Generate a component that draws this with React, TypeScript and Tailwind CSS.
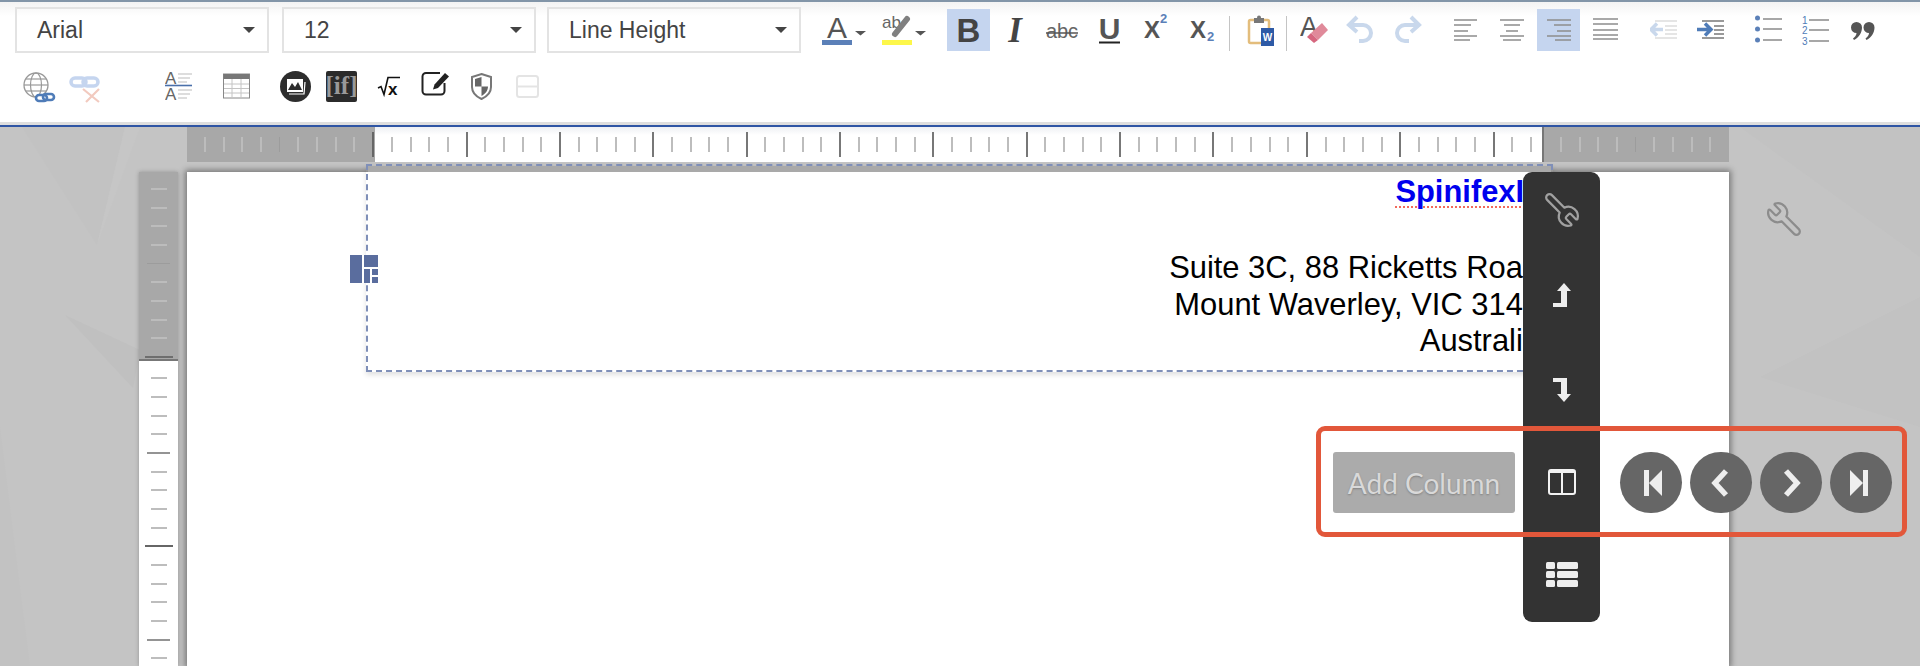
import type { ReactNode } from "react";
import { Wrench } from "lucide-react";

const Ico = ({ w, h = 46, className = "", children }: { w: number; h?: number; className?: string; children: ReactNode }) => (
  <svg width={w} height={h} viewBox={`0 0 ${w} ${h}`} className={`shrink-0 ${className}`}>
    {children}
  </svg>
);

const Lines = ({ rows, color = "#8c8c8c", sw = 1.5 }: { rows: number[][]; color?: string; sw?: number }) => (
  <>
    {rows.map(([a, b, y], i) => (
      <line key={i} x1={a} x2={b} y1={y} y2={y} stroke={color} strokeWidth={sw} />
    ))}
  </>
);

const Select = ({ label, className = "" }: { label: string; className?: string }) => (
  <div className={`w-[254px] h-[46px] shrink-0 border-2 border-[#e3e3e3] flex items-center justify-between pl-[20px] pr-[12px] text-[23px] text-[#444] ${className}`}>
    <span>{label}</span>
    <span className="w-0 h-0 border-x-[6px] border-x-transparent border-t-[6px] border-t-[#444]" />
  </div>
);

const HTick = ({ kind }: { kind: string }) => {
  const cls: Record<string, string> = {
    minor: "h-[15px] w-[2px] bg-[#bdbdbd]",
    major: "h-[25px] w-[2px] bg-[#777]",
    grayMinor: "h-[15px] w-[2px] bg-[#bcbcbc]",
    grayDim: "h-[15px] w-px bg-[#9c9c9c]",
    grayDark: "h-[25px] w-[2px] bg-[#666]",
  };
  return (
    <div className="w-[18.68px] shrink-0 flex justify-center items-center">
      <div className={cls[kind]} />
    </div>
  );
};

const VTick = ({ kind }: { kind: string }) => {
  const cls: Record<string, string> = {
    minor: "w-[16px] h-[2px] bg-[#bdbdbd]",
    mid: "w-[23px] h-[2px] bg-[#949494]",
    dark: "w-[28px] h-[2px] bg-[#666]",
    grayMinor: "w-[16px] h-[2px] bg-[#bcbcbc]",
    grayDim: "w-[23px] h-px bg-[#9c9c9c]",
    grayDark: "w-[28px] h-[2px] bg-[#6e6e6e]",
  };
  return (
    <div className="h-[18.68px] shrink-0 flex justify-center items-center">
      <div className={cls[kind]} />
    </div>
  );
};

const NavBtn = ({ children }: { children: ReactNode }) => (
  <div className="w-[62px] h-[61px] rounded-full bg-[#666] flex items-center justify-center">
    <svg width="28" height="30" viewBox="0 0 28 30">
      {children}
    </svg>
  </div>
);

const Toolbar = () => (
  <header className="h-[127px] shrink-0 border-t-2 border-b-2 border-t-[#8295a8] border-b-[#2f55a4] bg-linear-to-b from-[#f3f3f3] to-white to-[14px] shadow-[inset_0_-3px_0_#dedede]">
    {/* first row */}
    <div className="flex items-start pt-[5px] pl-[15px] h-[51px]">
      <Select label="Arial" />
      <Select label="12" className="ml-[13px]" />
      <Select label="Line Height" className="ml-[11px] mr-[1px]" />

      <Ico w={48} className="ml-[18px]">
        <text x="17" y="31" fontSize="30" fill="#555" textAnchor="middle">A</text>
        <rect x="2" y="33" width="30" height="5" fill="#5b80b8" />
        <polygon points="35,24 46,24 40.5,28.5" fill="#555" />
      </Ico>
      <Ico w={48} className="ml-[12px]">
        <text x="2" y="21" fontSize="17" fill="#666">ab</text>
        <line x1="27" y1="12" x2="15" y2="27" stroke="#808080" strokeWidth="6" strokeLinecap="round" />
        <rect x="2" y="33" width="30" height="5" fill="#fdf74a" />
        <polygon points="35,24 46,24 40.5,28.5" fill="#555" />
      </Ico>
      <div className="ml-[19px] mt-[2px] w-[43px] h-[42px] bg-[#c5d5ef]">
        <Ico w={43} h={42}>
          <text x="21.5" y="33" fontSize="33" fontWeight="700" fill="#444" textAnchor="middle">B</text>
        </Ico>
      </div>
      <Ico w={30} className="ml-[10px]">
        <text x="15" y="35" fontSize="35" fontWeight="700" fontStyle="italic" fontFamily="'Liberation Serif', serif" fill="#444" textAnchor="middle">I</text>
      </Ico>
      <Ico w={35} className="ml-[15px]">
        <text x="17" y="31" fontSize="20" fill="#666" textAnchor="middle">abc</text>
        <line x1="1" x2="33" y1="26" y2="26" stroke="#555" strokeWidth="1.5" />
      </Ico>
      <Ico w={30} className="ml-[15px]">
        <text x="14.5" y="32" fontSize="30" fontWeight="700" fill="#555" textAnchor="middle">U</text>
        <rect x="4" y="34.5" width="21" height="2" fill="#222" />
      </Ico>
      <Ico w={32} className="ml-[13px]">
        <text x="6" y="31" fontSize="24" fontWeight="700" fill="#555">X</text>
        <text x="22" y="16" fontSize="13" fontWeight="700" fill="#5b80b8">2</text>
      </Ico>
      <Ico w={32} className="ml-[16px]">
        <text x="4" y="31" fontSize="24" fontWeight="700" fill="#555">X</text>
        <text x="21" y="34" fontSize="13" fontWeight="700" fill="#5b80b8">2</text>
      </Ico>
      <div className="ml-[11px] mt-[9px] w-px h-[35px] bg-[#c4c4c4]" />
      <Ico w={32} className="ml-[15px]">
        <rect x="4" y="13" width="20" height="23" rx="1.5" fill="#fff" stroke="#e3bd7c" strokeWidth="2.5" />
        <rect x="9" y="11" width="10" height="5" fill="#777" />
        <circle cx="14" cy="10.5" r="2" fill="#777" />
        <rect x="16" y="21" width="13" height="18" fill="#2e5aa6" />
        <text x="22.5" y="34" fontSize="10" fontWeight="700" fill="#fff" textAnchor="middle">W</text>
      </Ico>
      <div className="ml-[9px] mt-[9px] w-px h-[35px] bg-[#c4c4c4]" />
      <Ico w={30} className="ml-[13px]">
        <text x="0" y="29" fontSize="27" fill="#555">A</text>
        <polygon points="22,16 28,23 18,33 11,26" fill="#e08a9a" />
        <polygon points="11,26 18,33 14,36 7,30" fill="#d6677f" />
      </Ico>
      <Ico w={29} className="ml-[16px]">
        <path d="M11 10 L3 18 L11 25 M4 18 H17 A8 8 0 0 1 17 34 H13" fill="none" stroke="#c9d8ec" strokeWidth="4" />
      </Ico>
      <Ico w={29} className="ml-[18px]">
        <path d="M18 10 L26 18 L18 25 M25 18 H12 A8 8 0 0 0 12 34 H16" fill="none" stroke="#c9d8ec" strokeWidth="4" />
      </Ico>
      <Ico w={24} className="ml-[32px]">
        <Lines rows={[[0, 23, 13], [0, 17, 18], [0, 14, 24], [0, 23, 29], [0, 16, 33]]} />
      </Ico>
      <Ico w={24} className="ml-[22px]">
        <Lines rows={[[0, 24, 13], [4, 20, 18], [6, 18, 24], [0, 24, 29], [3, 21, 33]]} />
      </Ico>
      <div className="ml-[13px] mt-[2px] w-[43px] h-[42px] bg-[#c5d5ef]">
        <Ico w={43} h={42}>
          <Lines rows={[[10, 34, 11], [17, 34, 16], [20, 34, 22], [10, 34, 27], [18, 34, 31]]} />
        </Ico>
      </div>
      <Ico w={25} className="ml-[13px]">
        <Lines rows={[[0, 25, 12], [0, 25, 17], [0, 25, 23], [0, 25, 28], [0, 25, 32]]} />
      </Ico>
      <Ico w={28} className="ml-[32px]">
        <Lines color="#dcdcdc" rows={[[5, 27, 14], [15, 27, 19], [15, 27, 23], [15, 27, 27], [5, 27, 31]]} />
        <path d="M7 16.5 L1 22.5 L7 28.5 M2 22.5 H13" fill="none" stroke="#c9d8ec" strokeWidth="3.5" />
      </Ico>
      <Ico w={28} className="ml-[19px]">
        <Lines color="#777" rows={[[5, 27, 14], [17, 27, 19], [17, 27, 23], [17, 27, 27], [5, 27, 31]]} />
        <path d="M8 16.5 L14 22.5 L8 28.5 M0 22.5 H13" fill="none" stroke="#4f7cb8" strokeWidth="3.5" />
      </Ico>
      <Ico w={28} className="ml-[30px]">
        <circle cx="2.5" cy="11" r="2.5" fill="#5b80b8" />
        <circle cx="2.5" cy="22" r="2.5" fill="#5b80b8" />
        <circle cx="2.5" cy="33" r="2.5" fill="#5b80b8" />
        <Lines color="#777" sw={1.3} rows={[[8, 27, 12], [8, 27, 22], [8, 27, 33]]} />
      </Ico>
      <Ico w={29} className="ml-[18px]">
        <text x="1" y="17" fontSize="10" fill="#4f7cb8">1</text>
        <text x="1" y="27" fontSize="10" fill="#4f7cb8">2</text>
        <text x="1" y="38" fontSize="10" fill="#4f7cb8">3</text>
        <Lines color="#777" sw={1.3} rows={[[8, 28, 13], [8, 28, 23], [8, 28, 34]]} />
      </Ico>
      <Ico w={26} className="ml-[20px]">
        <path d="M6.5 15 a5.5 5.5 0 0 1 5.5 5.5 c0 5 -3 10 -8 12.5 l-1 -1.5 c2 -1.5 3.5 -3.5 3.5 -5.5 a5.5 5.5 0 0 1 0 -11z" fill="#555" />
        <path d="M19 15 a5.5 5.5 0 0 1 5.5 5.5 c0 5 -3 10 -8 12.5 l-1 -1.5 c2 -1.5 3.5 -3.5 3.5 -5.5 a5.5 5.5 0 0 1 0 -11z" fill="#555" />
      </Ico>
    </div>

    {/* second row */}
    <div className="flex items-start pl-[22px] mt-[11px]">
      <Ico w={36}>
        <circle cx="14" cy="21" r="12" fill="none" stroke="#999" strokeWidth="1.3" />
        <ellipse cx="14" cy="21" rx="5.5" ry="12" fill="none" stroke="#999" strokeWidth="1.2" />
        <Lines color="#999" sw={1.2} rows={[[2, 26, 21], [4, 24, 15], [4, 24, 27]]} />
        <rect x="14" y="31" width="11" height="6" rx="3" fill="#fff" stroke="#4f7cb8" strokeWidth="2.6" />
        <rect x="21" y="30" width="11" height="6" rx="3" fill="none" stroke="#4f7cb8" strokeWidth="2.6" />
      </Ico>
      <Ico w={36} className="ml-[10px]">
        <rect x="3" y="14" width="15" height="8" rx="4" fill="none" stroke="#c5d5ef" strokeWidth="3.5" />
        <rect x="15" y="14" width="15" height="8" rx="4" fill="none" stroke="#c5d5ef" strokeWidth="3.5" />
        <path d="M15 25 L31 38 M31 25 L18 38" stroke="#f2cabf" strokeWidth="2.2" />
      </Ico>
      <Ico w={28} className="ml-[61px]">
        <text x="0" y="20" fontSize="17" fill="#666">A</text>
        <text x="0" y="36" fontSize="17" fill="#666">A</text>
        <Lines color="#c6c6c6" sw={1.2} rows={[[13, 27, 10], [13, 25, 14], [13, 22, 18], [13, 27, 26], [13, 25, 30], [13, 22, 34]]} />
        <line x1="0" x2="27" y1="21.5" y2="21.5" stroke="#4a70aa" strokeWidth="1.6" />
      </Ico>
      <Ico w={28} className="ml-[30px]">
        <rect x="0.5" y="10" width="26" height="24" fill="#fff" stroke="#888" />
        <rect x="0.5" y="10" width="26" height="5" fill="#777" />
        <Lines color="#c4c4c4" sw={1} rows={[[1, 26, 20], [1, 26, 24.5], [1, 26, 29]]} />
        <line x1="9" x2="9" y1="15" y2="34" stroke="#c4c4c4" />
        <line x1="18" x2="18" y1="15" y2="34" stroke="#c4c4c4" />
      </Ico>
      <Ico w={31} className="ml-[29px]">
        <circle cx="15.5" cy="22.5" r="15.5" fill="#2d2d2d" />
        <rect x="7" y="15" width="16" height="13" fill="#fff" />
        <path d="M8 26 L12 19 L15 23 L18 18 L22 26z" fill="#2d2d2d" />
        <path d="M9 30 L24 30 L25 18" fill="none" stroke="#fff" strokeWidth="1.2" />
      </Ico>
      <Ico w={31} className="ml-[15px]">
        <rect x="0" y="7" width="31" height="31" rx="2" fill="#2b2b2b" />
        <text x="15.5" y="30" fontSize="25" fontWeight="700" fontFamily="'Liberation Serif', serif" fill="#999" textAnchor="middle">[if]</text>
      </Ico>
      <Ico w={24} className="ml-[20px]">
        <path d="M1 24 L4 22.5 L7 30.5 L11 13.5 H23" fill="none" stroke="#111" strokeWidth="1.6" />
        <text x="11" y="31" fontSize="17" fontWeight="700" fill="#111">x</text>
      </Ico>
      <Ico w={30} className="ml-[20px]">
        <path d="M19 9 H5 A3.5 3.5 0 0 0 1.5 12.5 V27 A3.5 3.5 0 0 0 5 30.5 H20 A3.5 3.5 0 0 0 23.5 27 V19" fill="none" stroke="#222" strokeWidth="2" />
        <polygon points="24,9 28,12.5 17,24 12,25.5 13.5,20.5" fill="#222" />
      </Ico>
      <Ico w={23} className="ml-[19px]">
        <path d="M11.5 10 L21 13 V23 C21 29 16 33 11.5 35 C7 33 2 29 2 23 V13z" fill="#fff" stroke="#777" strokeWidth="2" />
        <path d="M11.5 13 L5 15 V22.5 H11.5z M11.5 22.5 H18 C18 27 15 30 11.5 32z" fill="#666" />
      </Ico>
      <Ico w={23} className="ml-[23px]">
        <rect x="1" y="12" width="21" height="21" rx="2.5" fill="none" stroke="#e4e4e4" strokeWidth="2" />
        <line x1="1" x2="22" y1="22.5" y2="22.5" stroke="#e4e4e4" strokeWidth="2" />
      </Ico>
    </div>
  </header>
);

const App = () => {
  const whiteTicks = Array.from({ length: 62 }, (_, i) => (i % 5 === 4 ? "major" : "minor"));
  const vWhite = Array.from({ length: 17 }, (_, i) => (i === 9 ? "dark" : i % 5 === 4 ? "mid" : "minor"));

  return (
    <div className="h-screen w-full flex flex-col overflow-hidden bg-[#c4c4c4] font-['Liberation_Sans',Arial,sans-serif]">
      <Toolbar />

      <main className="relative flex-1 flex flex-col min-h-0 overflow-hidden">
        {/* faint background facets */}
        <svg className="absolute inset-0 w-full h-full" viewBox="0 0 1920 539">
          <polygon points="22,0 97,118 125,0" fill="#c2c2c2" />
          <polygon points="97,118 125,0 140,0" fill="#c6c6c6" />
          <polygon points="65,188 140,223 133,261" fill="#c0c0c0" />
          <polygon points="1740,0 1920,0 1920,130" fill="#c2c2c2" />
          <polygon points="1760,250 1920,170 1920,300" fill="#c2c2c2" />
          <polygon points="0,300 30,539 0,539" fill="#c2c2c2" />
        </svg>

        {/* horizontal ruler */}
        <div className="relative ml-[187px] w-[1542px] h-[35px] shrink-0 flex">
          <div className="w-[188px] shrink-0 bg-[#a8a8a8] flex pl-[8.7px]">
            {[0, 1, 2, 3, 4, 5, 6, 7, 8, 9].map((k) => (
              <HTick key={k} kind={k === 9 ? "grayDark" : k === 4 ? "grayDim" : "grayMinor"} />
            ))}
          </div>
          <div className="flex-1 bg-linear-to-b from-[#eef0f4] to-white to-[8px] flex pl-[7.6px] overflow-hidden">
            {whiteTicks.map((kind, k) => (
              <HTick key={k} kind={kind} />
            ))}
          </div>
          <div className="w-[187px] shrink-0 bg-[#a8a8a8] border-l-2 border-[#777] flex pl-[7.7px] overflow-hidden">
            {[0, 1, 2, 3, 4, 5, 6, 7, 8].map((k) => (
              <HTick key={k} kind={k === 4 ? "grayDim" : "grayMinor"} />
            ))}
          </div>
        </div>

        <div className="relative flex-1 min-h-0 flex mt-[10px] ml-[139px]">
          {/* vertical ruler */}
          <div className="w-[39px] shrink-0 flex flex-col shadow-[0_0_4px_rgba(0,0,0,0.25)]">
            <div className="h-[189px] shrink-0 bg-[#a8a8a8] border-b-2 border-[#777] pt-[7.7px]">
              {[0, 1, 2, 3, 4, 5, 6, 7, 8, 9].map((k) => (
                <VTick key={k} kind={k === 9 ? "grayDark" : k === 4 ? "grayDim" : "grayMinor"} />
              ))}
            </div>
            <div className="flex-1 bg-white pt-[8px] overflow-hidden">
              {vWhite.map((kind, k) => (
                <VTick key={k} kind={kind} />
              ))}
            </div>
          </div>

          {/* page */}
          <div className="ml-[9px] w-[1542px] bg-white shadow-[0_0_6px_2px_rgba(0,0,0,0.4)]">
            <div className="relative ml-[179px] -mt-[8px] w-[1187px] h-[208px] border-2 border-dashed border-[#7f8fb8] shadow-[0_3px_5px_rgba(0,0,0,0.12)]">
              <div className="h-[6px] bg-[#a9a9a9]" />
              <div className="pt-[2px] pr-[11px] text-right text-[30.9px] leading-[36.5px] text-black">
                <div className="-mr-[3px] font-bold text-[#0000ee] underline decoration-dotted decoration-2 decoration-[#f26a5c] underline-offset-[4px] [text-decoration-skip-ink:none]">
                  SpinifexIT
                </div>
                <div className="mt-[39.5px]">Suite 3C, 88 Ricketts Road</div>
                <div>Mount Waverley, VIC 3149</div>
                <div>Australia</div>
              </div>
              {/* section layout handle */}
              <svg className="absolute left-[-18px] top-[89px]" width="28" height="28" viewBox="0 0 28 28">
                <rect x="-1" y="-1" width="30" height="30" fill="#fff" />
                <g fill="#5a6d9e">
                  <rect x="0" y="0" width="12" height="28" />
                  <rect x="14" y="0" width="14" height="12" />
                  <rect x="14" y="14" width="6" height="14" />
                  <rect x="22" y="14" width="6" height="6" />
                  <rect x="22" y="22" width="6" height="6" />
                </g>
              </svg>
            </div>
          </div>
        </div>

        {/* wrench beside the page */}
        <Wrench className="absolute left-[1765px] top-[73px] -scale-x-100 text-[#8c8c8c]" size={38} strokeWidth={1.4} />

        {/* dark side menu */}
        <div className="absolute left-[1523px] top-[45px] w-[77px] h-[450px] rounded-[9px] bg-[#333] flex flex-col items-center pt-[19px]">
          <Wrench className="-scale-y-100 text-[#a0a0a0]" size={38} strokeWidth={1.4} />
          <svg className="mt-[54px]" width="18" height="24" viewBox="0 0 18 24">
            <path d="M11 0 L18 8 H14 V24 H0 V20 H8 V8 H4z" fill="#eee" />
          </svg>
          <svg className="mt-[71px]" width="18" height="24" viewBox="0 0 18 24">
            <path d="M0 0 H14 V16 H18 L11 24 L4 16 H8 V4 H0z" fill="#eee" />
          </svg>
          <svg className="mt-[67px]" width="28" height="26" viewBox="0 0 28 26">
            <rect x="1" y="1" width="26" height="24" rx="2" fill="none" stroke="#f2f2f2" strokeWidth="2" />
            <rect x="1" y="1" width="26" height="3" fill="#f2f2f2" />
            <line x1="14" x2="14" y1="2" y2="24" stroke="#f2f2f2" strokeWidth="2" />
          </svg>
          <svg className="mt-[67px]" width="32" height="25" viewBox="0 0 32 25" fill="#eee">
            <rect x="0" y="0" width="9" height="7" rx="1.5" />
            <rect x="11" y="0" width="21" height="7" rx="1.5" />
            <rect x="0" y="9" width="9" height="7" rx="1.5" />
            <rect x="11" y="9" width="21" height="7" rx="1.5" />
            <rect x="0" y="18" width="9" height="7" rx="1.5" />
            <rect x="11" y="18" width="21" height="7" rx="1.5" />
          </svg>
        </div>

        {/* orange callout */}
        <div className="absolute left-[1316px] top-[299px] w-[591px] h-[111px] border-[5px] border-[#e2573a] rounded-[9px] flex items-start pt-[21px] pl-[12px]">
          <div className="w-[182px] h-[61px] rounded-[3px] bg-[#ababab] flex items-center justify-center font-['Lato',sans-serif] text-[28px] text-[#d9d9d9] [text-shadow:0_1px_2px_rgba(0,0,0,0.25)]">
            Add Column
          </div>
          <div className="ml-[105px] flex gap-[8px]">
            <NavBtn>
              <rect x="7" y="2" width="5" height="26" fill="#eee" />
              <polygon points="12,15 25,2 25,28" fill="#eee" />
            </NavBtn>
            <NavBtn>
              <path d="M19 3 L8 15 L19 27" fill="none" stroke="#eee" strokeWidth="5.5" />
            </NavBtn>
            <NavBtn>
              <path d="M9 3 L20 15 L9 27" fill="none" stroke="#eee" strokeWidth="5.5" />
            </NavBtn>
            <NavBtn>
              <rect x="16" y="2" width="5" height="26" fill="#eee" />
              <polygon points="16,15 3,2 3,28" fill="#eee" />
            </NavBtn>
          </div>
        </div>
      </main>
    </div>
  );
};

export default App;
